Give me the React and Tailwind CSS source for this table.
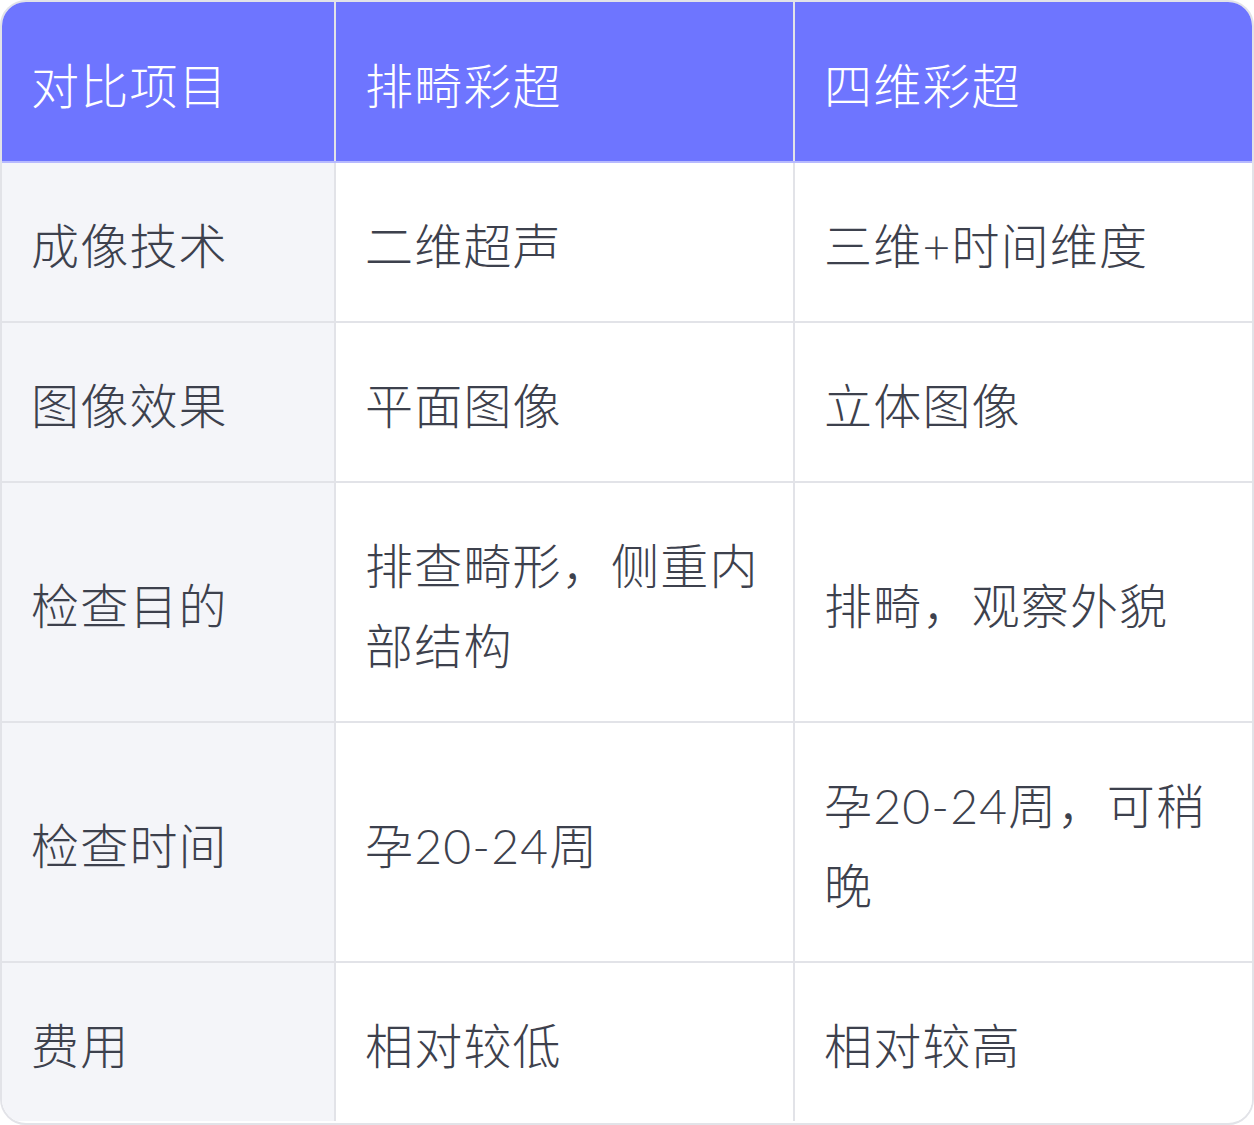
const ROWS = [
  ['成像技术', '二维超声', '三维+时间维度'],
  ['图像效果', '平面图像', '立体图像'],
  ['检查目的', '排查畸形，侧重内部结构', '排畸，观察外貌'],
  ['检查时间', '孕20-24周', '孕20-24周，可稍晚'],
  ['费用', '相对较低', '相对较高'],
];

const HEAD = ['对比项目', '排畸彩超', '四维彩超'];

export default function App() {
  return (
    <div
      className="w-[1254px] h-[1125px] bg-white"
      style={{ fontFamily: 'Lato, "Noto Sans CJK SC", sans-serif' }}
    >
      <div className="w-[1254px] h-[1125px] overflow-hidden rounded-[26px] border-2 border-[#e2e3e8]">
        <table className="w-full border-collapse table-fixed text-[48px] leading-[80px] font-light tracking-[1.2px]">
          <colgroup>
            <col className="w-[333px]" />
            <col className="w-[459px]" />
            <col />
          </colgroup>
          <thead>
            <tr className="bg-[#6e75ff] text-white">
              {HEAD.map((h, i) => (
                <th
                  key={h}
                  className={`h-[160px] px-[29px] pt-[8px] pb-0 text-left font-light align-middle border-b-2 border-[#b7baff] ${
                    i > 0 ? 'border-l-2 border-l-[#e2e3e8]' : ''
                  }`}
                >
                  {h}
                </th>
              ))}
            </tr>
          </thead>
          <tbody className="text-[#3d414d]">
            {ROWS.map((r, ri) => (
              <tr key={r[0]} className={ri > 0 ? 'border-t-2 border-[#e2e3e8]' : ''}>
                {r.map((c, ci) => (
                  <td
                    key={ci}
                    className={`px-[29px] pt-[43px] pb-[35px] align-middle ${
                      ci === 0 ? 'bg-[#f4f5f9]' : 'bg-white border-l-2 border-[#e2e3e8]'
                    }`}
                  >
                    {c}
                  </td>
                ))}
              </tr>
            ))}
          </tbody>
        </table>
      </div>
    </div>
  );
}
